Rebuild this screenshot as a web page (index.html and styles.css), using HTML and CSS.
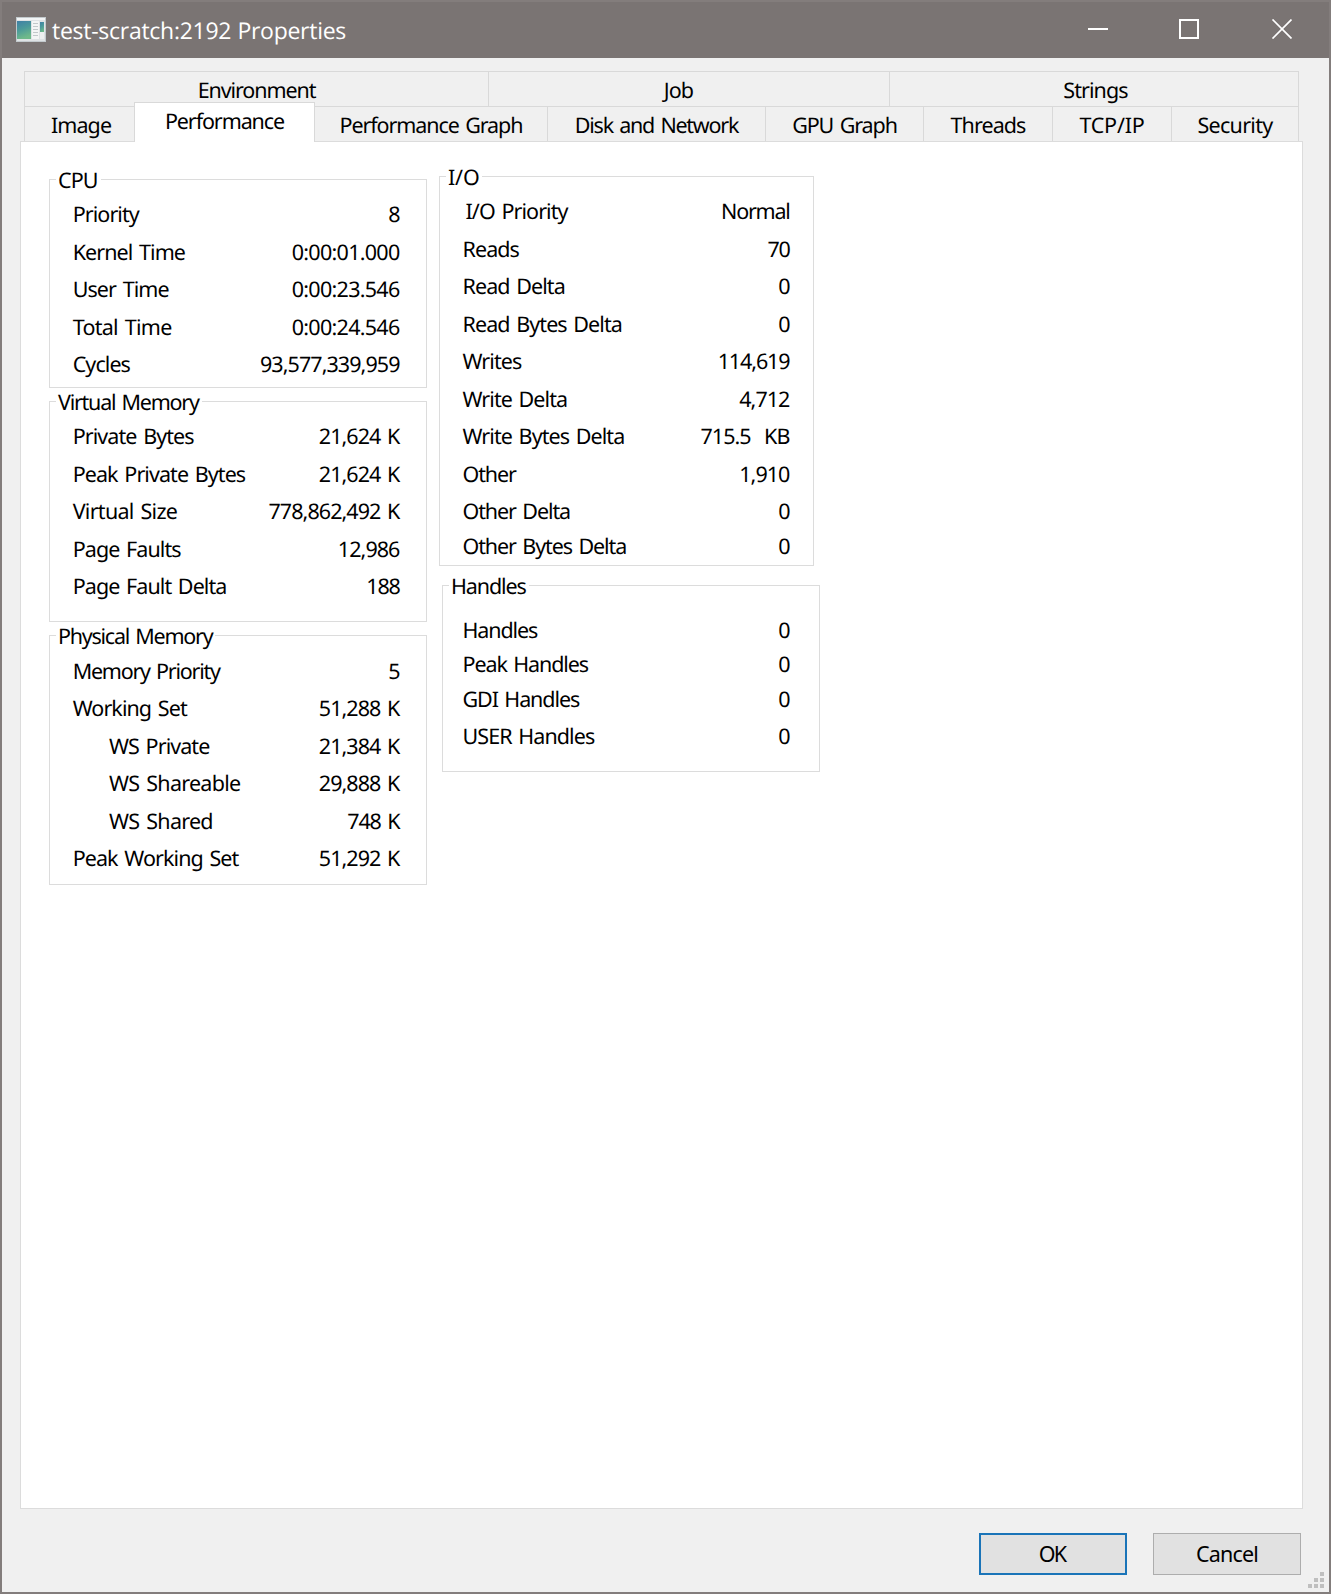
FILE: index.html
```
<!DOCTYPE html>
<html lang="en">
<head>
<meta charset="utf-8">
<title>test-scratch:2192 Properties</title>
<link rel="stylesheet" href="styles.css">
</head>
<body>
<div class="window">
  <header class="titlebar">
    <svg class="app-icon" width="30" height="25" viewBox="0 0 30 25">
      <defs>
        <linearGradient id="screen" x1="0" y1="0" x2="0.3" y2="1">
          <stop offset="0" stop-color="#3f7fa6"/><stop offset="0.5" stop-color="#4b9a9a"/><stop offset="1" stop-color="#6fb98a"/>
        </linearGradient>
      </defs>
      <rect width="30" height="25" fill="#dfe3e5"/>
      <rect x="0.5" y="0.5" width="29" height="24" fill="none" stroke="#c3cacd"/>
      <rect x="1" y="1" width="28" height="2" fill="#f3f5f6"/>
      <rect x="1" y="4" width="14" height="18" fill="url(#screen)"/>
      <rect x="16" y="4" width="7" height="18" fill="#f4f5f5"/>
      <path d="M17 6.5h5M17 9.5h5M17 12.5h5M17 15.5h5M17 18.5h5" stroke="#c2c8ca"/>
      <rect x="24" y="5" width="4" height="11" fill="url(#screen)"/>
      <rect x="24" y="15" width="4" height="7" fill="#eef0f0"/>
    </svg>
    <h1 class="title">test-scratch:2192 Properties</h1>
    <svg class="controls" width="204" height="20" viewBox="0 0 204 20" fill="none" stroke="#fff">
      <path d="M0 10h20" stroke-width="2"/>
      <rect x="92" y="1" width="18" height="18" stroke-width="2"/>
      <path d="M184.5 0.5l19 19M203.5 0.5l-19 19" stroke-width="1.7"/>
    </svg>
  </header>
  <main class="body">
    <nav class="tabs">
      <div class="tab-row back">
        <span class="tab snug">Environment</span><span class="tab job">Job</span><span class="tab strings">Strings</span>
      </div>
      <div class="tab-row front">
        <span class="tab image">Image</span><span class="tab active snug">Performance</span><span class="tab snug">Performance Graph</span><span class="tab tight">Disk and Network</span><span class="tab snug">GPU Graph</span><span class="tab">Threads</span><span class="tab wide">TCP/IP</span><span class="tab loose">Security</span>
      </div>
    </nav>
    <section class="panel">
      <div class="column left">
        <section class="group cpu">
          <h2 class="legend">CPU</h2>
          <div class="row"><span>Priority</span><span>8</span></div>
          <div class="row"><span>Kernel Time</span><span class="loose">0:00:01.000</span></div>
          <div class="row"><span>User Time</span><span class="loose">0:00:23.546</span></div>
          <div class="row"><span class="loose">Total Time</span><span class="loose">0:00:24.546</span></div>
          <div class="row"><span>Cycles</span><span>93,577,339,959</span></div>
        </section>
        <section class="group virtual">
          <h2 class="legend tight">Virtual Memory</h2>
          <div class="row"><span>Private Bytes</span><span>21,624 K</span></div>
          <div class="row"><span>Peak Private Bytes</span><span>21,624 K</span></div>
          <div class="row"><span class="loose">Virtual Size</span><span>778,862,492 K</span></div>
          <div class="row"><span>Page Faults</span><span>12,986</span></div>
          <div class="row"><span>Page Fault Delta</span><span class="tight">188</span></div>
        </section>
        <section class="group physical">
          <h2 class="legend tight">Physical Memory</h2>
          <div class="row"><span class="tight">Memory Priority</span><span>5</span></div>
          <div class="row"><span>Working Set</span><span>51,288 K</span></div>
          <div class="row sub"><span>WS Private</span><span>21,384 K</span></div>
          <div class="row sub"><span class="loose">WS Shareable</span><span>29,888 K</span></div>
          <div class="row sub"><span class="loose">WS Shared</span><span class="snug">748 K</span></div>
          <div class="row"><span>Peak Working Set</span><span>51,292 K</span></div>
        </section>
      </div>
      <div class="column right">
        <section class="group io">
          <h2 class="legend wide">I/O</h2>
          <div class="row nudge"><span>I/O Priority</span><span class="tight">Normal</span></div>
          <div class="row"><span>Reads</span><span class="tight">70</span></div>
          <div class="row"><span>Read Delta</span><span>0</span></div>
          <div class="row"><span>Read Bytes Delta</span><span>0</span></div>
          <div class="row"><span>Writes</span><span class="snug">114,619</span></div>
          <div class="row"><span>Write Delta</span><span>4,712</span></div>
          <div class="row"><span>Write Bytes Delta</span><span>715.5&nbsp; KB</span></div>
          <div class="row"><span class="snug">Other</span><span>1,910</span></div>
          <div class="row"><span class="snug">Other Delta</span><span>0</span></div>
          <div class="row"><span class="snug">Other Bytes Delta</span><span>0</span></div>
        </section>
        <section class="group handles">
          <h2 class="legend snug">Handles</h2>
          <div class="row"><span class="snug">Handles</span><span>0</span></div>
          <div class="row"><span class="snug">Peak Handles</span><span>0</span></div>
          <div class="row"><span class="snug">GDI Handles</span><span>0</span></div>
          <div class="row"><span>USER Handles</span><span>0</span></div>
        </section>
      </div>
    </section>
    <footer class="actions">
      <button class="button default">OK</button>
      <button class="button">Cancel</button>
    </footer>
  </main>
  <svg class="grip" width="16" height="16" viewBox="0 0 16 16" fill="#bfbfbf">
    <path d="M12 0h4v4h-4zM6 6h4v4h-4zM12 6h4v4h-4zM0 12h4v4h-4zM6 12h4v4h-4zM12 12h4v4h-4z"/>
  </svg>
</div>
</body>
</html>
```
FILE: styles.css
```
* { box-sizing: border-box; }

body {
  margin: 0;
  font: 21.5px/30px "Noto Sans", "Open Sans", sans-serif;
  letter-spacing: -0.93px;
  word-spacing: 2px;
  text-rendering: geometricPrecision;
  color: #000;
}

.window {
  position: relative;
  display: flex;
  flex-direction: column;
  width: 1331px;
  height: 1594px;
  border: 2px solid #837d7c;
  background: #f0f0f0;
}

.titlebar {
  display: flex;
  align-items: center;
  height: 56px;
  padding: 0 37px 2px 14px;
  background: #7a7473;
  color: #fff;
}

.app-icon { flex: none; }

.title {
  flex: 1;
  margin: 0 0 0 6px;
  padding-top: 2px;
  font: 23px/30px "Open Sans", "Noto Sans", sans-serif;
  letter-spacing: -0.27px;
  word-spacing: 0.5px;
}

.controls { flex: none; }

.body {
  flex: 1;
  display: flex;
  flex-direction: column;
  padding: 13px 26px 17px 18px;
}

.tabs { padding: 0 4px; }

.tab-row {
  display: grid;
  height: 35px;
  border-top: 1px solid #d9d9d9;
  border-left: 1px solid #d9d9d9;
}

.back { grid-template-columns: 464px 401px 409px; }
.front { grid-template-columns: 110px 180px 233px 218px 158px 129px 119px 127px; }

.tab {
  border-right: 1px solid #d9d9d9;
  padding: 4px 0 0;
  text-align: center;
  white-space: nowrap;
}

.job { padding-right: 21px; }
.strings { padding-left: 3px; }
.image { padding-left: 3px; }

.active {
  position: relative;
  height: 40px;
  margin: -5px 0 0 -1px;
  border: 1px solid #d9d9d9;
  border-bottom: 0;
  background: #fff;
}

.panel {
  display: flex;
  align-items: flex-start;
  gap: 12px;
  height: 1368px;
  padding: 0 0 0 28px;
  border: 1px solid #dcdcdc;
  background: #fff;
}

.left { padding-top: 37px; width: 378px; }
.right { padding-top: 34px; width: 381px; }

.group {
  position: relative;
  display: grid;
  grid-auto-rows: 37.5px;
  align-content: start;
  padding-top: 20px;
  border: 1px solid #dcdcdc;
}

.legend {
  position: absolute;
  top: -11px;
  left: 6px;
  margin: 0;
  padding: 0 3px 0 2px;
  background: #fff;
  font: inherit;
  line-height: 24px;
}

.row {
  display: flex;
  justify-content: space-between;
  padding: 0 26.5px 0 22.7px;
  white-space: nowrap;
}

.sub { padding-left: 59px; }

.cpu { height: 209px; }
.virtual { height: 221px; margin-top: 13px; }
.physical { height: 250px; margin-top: 13px; padding-top: 21px; grid-template-rows: 37px 38px 37px 38px 37px; }
.io { width: 375px; height: 390px; grid-template-rows: repeat(8, 37.5px) 35px; }
.handles { width: 378px; height: 187px; margin: 19px 0 0 3px; padding-top: 30px; grid-template-rows: 34px 35px 37px; }
.io .row { padding: 0 23.5px 0 22.5px; }
.io .nudge { padding-left: 25.5px; }
.handles .row { padding: 0 29.5px 0 19.5px; }

/* Tracking adjustments for individual labels */
.tight { letter-spacing: -1.25px; }
.snug { letter-spacing: -1.1px; }
.loose { letter-spacing: -0.72px; }
.wide { letter-spacing: -0.2px; }

.actions {
  display: flex;
  justify-content: flex-end;
  gap: 26px;
  margin: 24px 2px 0 0;
}

.button {
  width: 148px;
  height: 42px;
  padding: 0;
  border: 1px solid #adadad;
  background: #e1e1e1;
  color: inherit;
  font: inherit;
  letter-spacing: -0.8px;
}

.default {
  padding: 0 2px 0 0;
  border: 2px solid #1a74b8;
  letter-spacing: -1.8px;
}

.grip {
  position: absolute;
  right: 5px;
  bottom: 4px;
}
```
